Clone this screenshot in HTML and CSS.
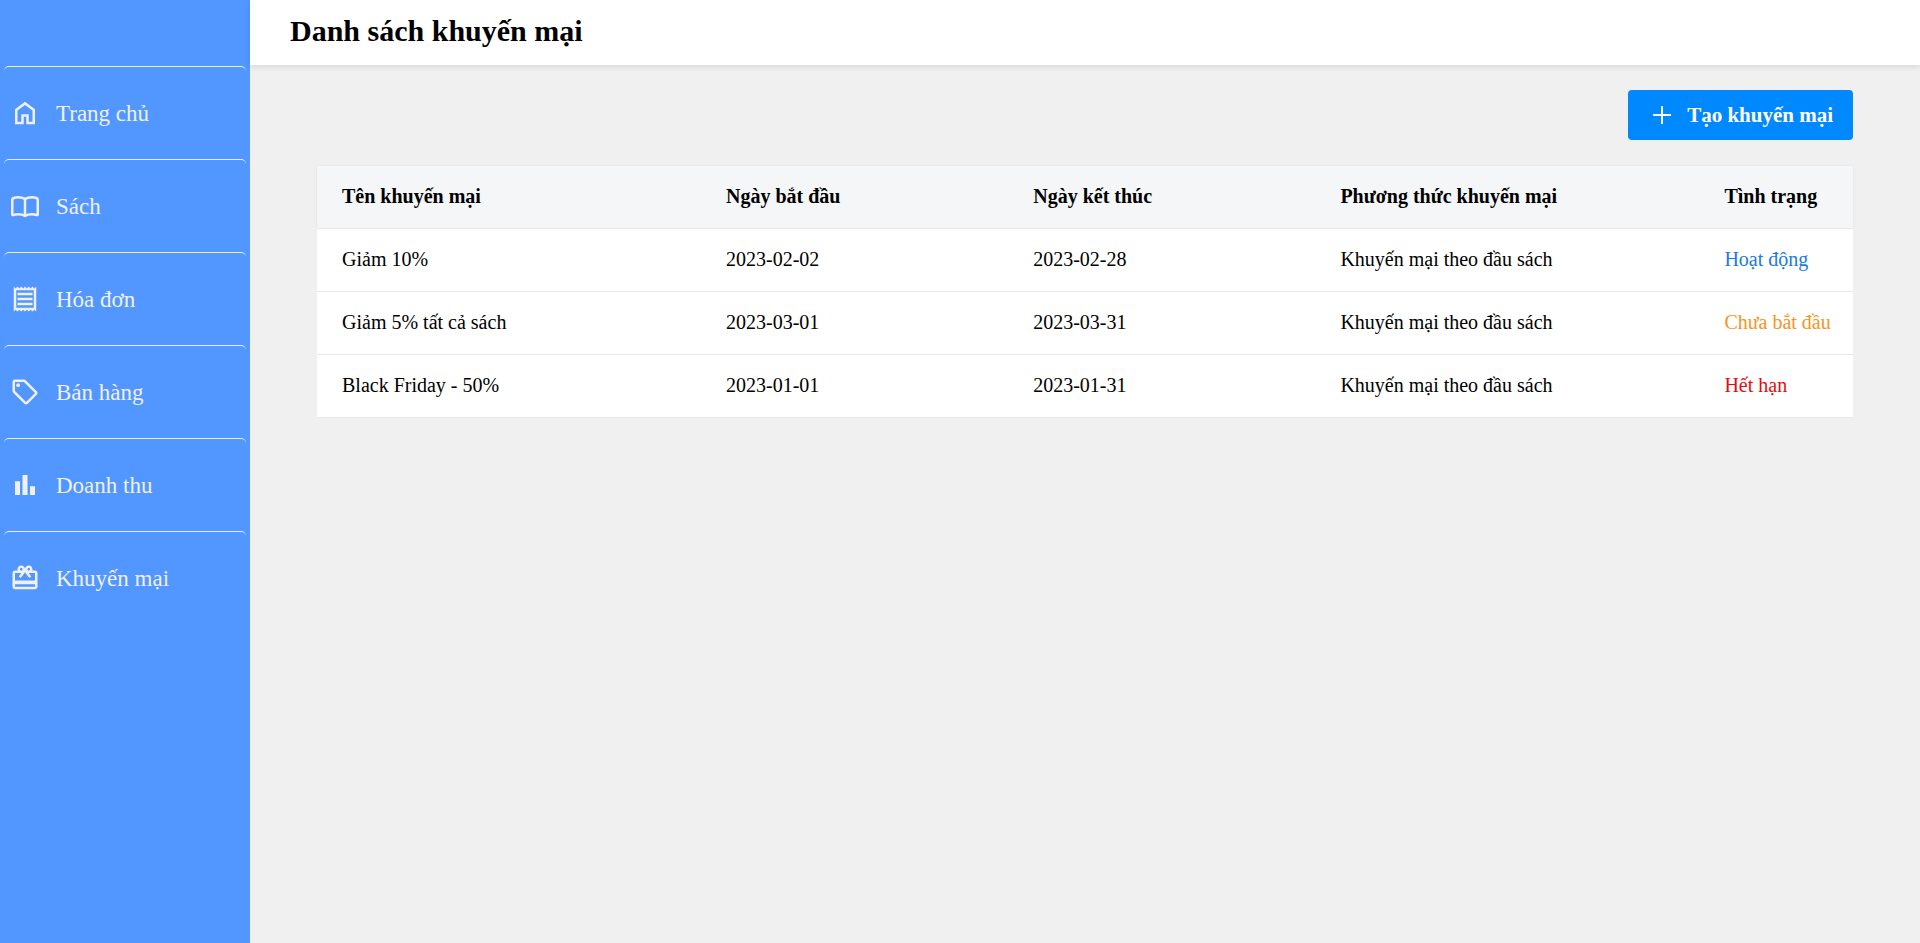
FILE: index.html
```html
<!DOCTYPE html>
<html lang="vi">
<head>
<meta charset="utf-8">
<title>Danh sách khuyến mại</title>
<link rel="stylesheet" href="styles.css">
</head>
<body>
<div class="app">
  <nav class="sidebar" aria-label="Menu">
    <a class="nav-item" href="#home">
      <svg class="icon" viewBox="0 0 24 24" aria-hidden="true"><path d="M6 19h3v-6h6v6h3v-9l-6-4.5L6 10v9Zm-2 2V9l8-6 8 6v12h-7v-6h-2v6H4Z"/></svg>
      <span class="label">Trang chủ</span>
    </a>
    <a class="nav-item" href="#books">
      <svg class="icon icon-line" viewBox="0 0 24 24" aria-hidden="true"><path d="M12 6.400C10.500 5.400 8.700 5 6.500 5C5 5 3.600 5.300 2.500 5.800Q1.800 6.100 1.800 6.900V18.500Q1.800 19.500 2.700 19.200C3.900 18.800 5.200 18.600 6.500 18.600C8.700 18.600 10.500 19 12 19.900C13.500 19 15.300 18.600 17.500 18.600C18.800 18.600 20.100 18.800 21.300 19.200Q22.200 19.500 22.200 18.500V6.900Q22.200 6.100 21.500 5.800C20.400 5.300 19 5 17.500 5C15.300 5 13.500 5.400 12 6.400ZM12 6.400V19.800"/></svg>
      <span class="label">Sách</span>
    </a>
    <a class="nav-item" href="#invoices">
      <svg class="icon" viewBox="0 0 24 24" aria-hidden="true"><path d="M19.5 3.5 18 2l-1.500 1.500L15 2l-1.500 1.500L12 2l-1.500 1.500L9 2 7.500 3.500 6 2 4.500 3.500 3 2v20l1.500-1.500L6 22l1.500-1.500L9 22l1.500-1.500L12 22l1.500-1.500L15 22l1.500-1.500L18 22l1.500-1.500L21 22V2l-1.500 1.500zM19 19.090H5V4.910h14v14.180zM6 15h12v2H6zm0-4h12v2H6zm0-4h12v2H6z"/></svg>
      <span class="label">Hóa đơn</span>
    </a>
    <a class="nav-item" href="#sales">
      <svg class="icon" viewBox="0 0 24 24" aria-hidden="true"><path d="m21.410 11.410-8.830-8.830C12.210 2.210 11.700 2 11.170 2H4C2.900 2 2 2.900 2 4v7.170c0 .53.21 1.040.59 1.410l8.830 8.830c.78.78 2.050.78 2.830 0l7.170-7.170c.78-.78.78-2.040-.01-2.830zM12.830 20 4 11.170V4h7.170L20 12.830z"/><circle cx="6.500" cy="6.500" r="1.500"/></svg>
      <span class="label">Bán hàng</span>
    </a>
    <a class="nav-item" href="#revenue">
      <svg class="icon" viewBox="0 0 24 24" aria-hidden="true"><path d="M4 9h4v11H4zm12 4h4v7h-4zm-6-9h4v16h-4z"/></svg>
      <span class="label">Doanh thu</span>
    </a>
    <a class="nav-item" href="#promotions" aria-current="page">
      <svg class="icon" viewBox="0 0 24 24" aria-hidden="true"><path d="M20 6h-2.180c.11-.31.18-.65.18-1 0-1.660-1.340-3-3-3-1.050 0-1.960.54-2.500 1.350l-.5.67-.5-.68C10.960 2.540 10.050 2 9 2 7.340 2 6 3.340 6 5c0 .35.07.69.18 1H4c-1.110 0-1.990.89-1.990 2L2 19c0 1.110.89 2 2 2h16c1.110 0 2-.89 2-2V8c0-1.110-.89-2-2-2zm-5-2c.55 0 1 .45 1 1s-.45 1-1 1-1-.45-1-1 .45-1 1-1zM9 4c.55 0 1 .45 1 1s-.45 1-1 1-1-.45-1-1 .45-1 1-1zm11 15H4v-2h16v2zm0-5H4V8h5.080L7 10.830 8.620 12 11 8.760l1-1.360 1 1.360L15.380 12 17 10.830 14.920 8H20v6z"/></svg>
      <span class="label">Khuyến mại</span>
    </a>
  </nav>
  <div class="page">
    <header class="topbar"><h1 class="title">Danh sách khuyến mại</h1></header>
    <main class="content">
      <button class="create" type="button">
        <svg class="plus" viewBox="0 0 18 18" aria-hidden="true"><path d="M9 0v18M0 9h18"/></svg>
        <span>Tạo khuyến mại</span>
      </button>
      <table class="promos">
        <colgroup><col class="w-name"><col class="w-date"><col class="w-date"><col class="w-method"><col class="w-status"></colgroup>
        <thead>
          <tr><th scope="col">Tên khuyến mại</th><th scope="col">Ngày bắt đầu</th><th scope="col">Ngày kết thúc</th><th scope="col">Phương thức khuyến mại</th><th scope="col">Tình trạng</th></tr>
        </thead>
        <tbody>
          <tr><td>Giảm 10%</td><td>2023-02-02</td><td>2023-02-28</td><td>Khuyến mại theo đầu sách</td><td class="active">Hoạt động</td></tr>
          <tr><td>Giảm 5% tất cả sách</td><td>2023-03-01</td><td>2023-03-31</td><td>Khuyến mại theo đầu sách</td><td class="pending">Chưa bắt đầu</td></tr>
          <tr><td>Black Friday - 50%</td><td>2023-01-01</td><td>2023-01-31</td><td>Khuyến mại theo đầu sách</td><td class="expired">Hết hạn</td></tr>
        </tbody>
      </table>
    </main>
  </div>
</div>
</body>
</html>
```
FILE: styles.css
```css
* { box-sizing: border-box; }

body {
  margin: 0;
  background: #f0f0f0;
  color: #000;
  font-family: "Liberation Serif", "Times New Roman", serif;
}

.app {
  display: flex;
  min-height: 100vh;
}

.sidebar {
  flex: 0 0 250px;
  padding: 66px 4px 0;
  background: #5297ff;
}

.nav-item {
  display: flex;
  align-items: center;
  gap: 16px;
  height: 93px;
  padding: 0 6px;
  border-top: 1px solid #e6efff;
  border-radius: 5px;
  color: #f0f0f0;
  font-size: 23px;
  text-decoration: none;
}

.label { padding-top: 2px; }

.icon {
  width: 30px;
  height: 30px;
  fill: currentColor;
}

.icon-line {
  fill: none;
  stroke: currentColor;
  stroke-width: 2;
  stroke-linejoin: round;
}

.page {
  flex: 1;
  min-width: 0;
}

.topbar {
  height: 65px;
  padding: 14px 40px;
  background: #fff;
  box-shadow: 0 2px 6px rgba(0, 0, 0, 0.1);
}

.title {
  margin: 0;
  font-size: 30px;
  line-height: 34px;
}

.content {
  display: flex;
  flex-direction: column;
  align-items: flex-end;
  gap: 26px;
  padding: 25px 67px;
}

.create {
  display: flex;
  align-items: center;
  gap: 16px;
  height: 50px;
  padding: 0 20px 0 25px;
  border: 0;
  border-radius: 4px;
  background: #08f;
  color: #fff;
  font: bold 21px "Liberation Serif", "Times New Roman", serif;
}

.plus {
  width: 18px;
  height: 18px;
  fill: none;
  stroke: currentColor;
  stroke-width: 2;
}

.promos {
  width: 100%;
  table-layout: fixed;
  border-collapse: collapse;
  background: #fff;
  font-size: 20px;
  text-align: left;
}

.promos thead {
  background: #f4f6f8;
  box-shadow: 0 0 2px rgba(0, 0, 0, 0.08);
}

.promos th,
.promos td {
  padding: 0 0 0 25px;
  border-bottom: 1px solid #e8e8e8;
  white-space: nowrap;
}

.promos th { height: 62px; }
.promos td { height: 63px; }

.w-name, .w-method { width: 25%; }
.w-date { width: 20%; }
.w-status { width: 10%; }

.active { color: #1a7ae0; }
.pending { color: #f59523; }
.expired { color: #e00f0f; }
```
